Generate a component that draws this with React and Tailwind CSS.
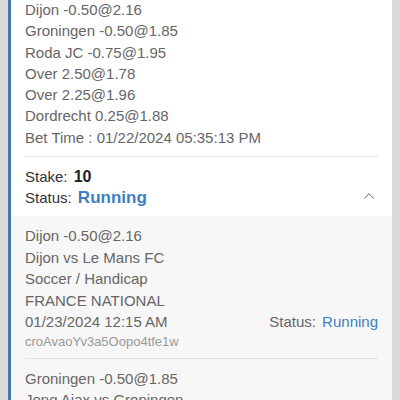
import React from 'react';
import { ChevronUp } from 'lucide-react';

const picks = [
  'Dijon -0.50@2.16',
  'Groningen -0.50@1.85',
  'Roda JC -0.75@1.95',
  'Over 2.50@1.78',
  'Over 2.25@1.96',
  'Dordrecht 0.25@1.88',
];

const legs = [
  {
    pick: 'Dijon -0.50@2.16',
    match: 'Dijon vs Le Mans FC',
    type: 'Soccer / Handicap',
    league: 'FRANCE NATIONAL',
    date: '01/23/2024 12:15 AM',
    status: 'Running',
    code: 'croAvaoYv3a5Oopo4tfe1w',
  },
  {
    pick: 'Groningen -0.50@1.85',
    match: 'Jong Ajax vs Groningen',
    type: 'Soccer / Handicap',
    league: 'HOLLAND EERSTE DIVISIE',
    date: '01/23/2024 02:00 AM',
    status: 'Running',
    code: 'dhT3kq0Pz8bWm2xLr9s1aa',
  },
];

const App = () => {
  return (
    <div className="h-[400px] overflow-hidden bg-[#d9d9d9] px-2 font-['Liberation_Sans',Arial,sans-serif]">
      <div className="-mt-[1px] border-l-[3px] border-[#4877ae] bg-white">
        <div className="px-[14px] text-[15px] leading-[21.3px] text-[#666]">
          {picks.map((p) => (
            <div key={p}>{p}</div>
          ))}
          <div>Bet Time : 01/22/2024 05:35:13 PM</div>
        </div>
        <div className="mx-[14px] mt-[8px] border-t border-[#e6e6e6]" />
        <div className="flex items-end justify-between px-[14px] pt-[9px] pb-[8px] text-[15px] leading-[21px] text-[#333]">
          <div>
            <div>
              Stake: <span className="ml-0.5 text-[16px] font-bold text-[#222]">10</span>
            </div>
            <div>
              Status: <span className="ml-0.5 text-[17px] font-bold text-[#3d7fc4]">Running</span>
            </div>
          </div>
          <ChevronUp size={18} strokeWidth={1.25} className="mb-[3px] text-[#555]" />
        </div>
        <div className="bg-[#f7f7f7] px-[14px]">
          {legs.map((l, i) => (
            <div
              key={i}
              className={`pt-[9px] pb-[7px] text-[15px] leading-[21.5px] text-[#666] ${i > 0 ? 'border-t border-[#e3e3e3]' : ''}`}
            >
              <div>{l.pick}</div>
              <div>{l.match}</div>
              <div>{l.type}</div>
              <div>{l.league}</div>
              <div className="flex justify-between">
                <span>{l.date}</span>
                <span>
                  Status: <span className="ml-0.5 text-[#3d7fc4]">{l.status}</span>
                </span>
              </div>
              <div className="text-[13px] leading-[18px] text-[#999]">{l.code}</div>
            </div>
          ))}
        </div>
      </div>
    </div>
  );
};

export default App;
